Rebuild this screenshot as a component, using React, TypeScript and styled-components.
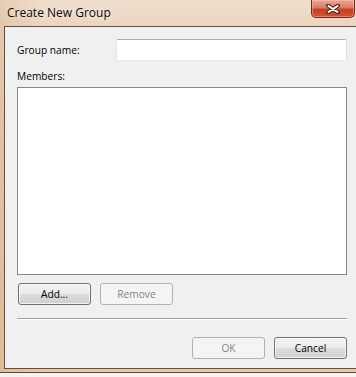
import React, { FC } from "react";
import styled, { createGlobalStyle } from "styled-components";

const GlobalStyle = createGlobalStyle`
  html, body {
    margin: 0;
    padding: 0;
    background: #f6f2ee;
    overflow: hidden;
  }
  * { box-sizing: border-box; }
`

const Window = styled.div`
  width: 356px;
  height: 373px;
  display: flex;
  flex-direction: column;
  overflow: hidden;
  font-family: "Open Sans", "Noto Sans", sans-serif;
  font-size: 10.2px;
  color: #000;
  border-bottom: 1px solid #5a4a40;
  background:
    linear-gradient(to right, rgba(200, 150, 110, 0.25) 0, rgba(200, 150, 110, 0) 40px),
    linear-gradient(to bottom, #efdecd 0, #ecd6c1 22px, #e8cdb2 200px, #e9c8a6 100%);
`

const TitleBar = styled.div`
  height: 26px;
  flex: none;
  display: flex;
  align-items: flex-start;
  padding-left: 7px;
`

const Title = styled.div`
  margin-top: 4px;
  font-size: 12px;
  color: #0a0a0a;
  text-shadow: 0 0 6px rgba(255, 255, 255, 0.9);
`

const CloseButton = styled.div`
  margin-left: auto;
  margin-right: 1px;
  width: 44px;
  height: 18px;
  display: flex;
  align-items: center;
  justify-content: center;
  border: 1px solid #6e2a1c;
  border-top: none;
  border-radius: 0 0 5px 5px;
  background: linear-gradient(to bottom, #e9a896 0, #dc7a62 45%, #c8401f 55%, #d2522e 100%);
  box-shadow: inset 0 0 0 1px rgba(255, 200, 180, 0.45);
`

const Client = styled.div`
  margin-left: 4px;
  width: 370px;
  height: 343px;
  flex: none;
  border: 1px solid #5e5048;
  background: #f0f0f0;
  padding: 12px 0 0 12px;
`

const Content = styled.div`
  width: 330px;
  display: flex;
  flex-direction: column;
`

const FieldRow = styled.div`
  display: flex;
  align-items: center;
  justify-content: space-between;
  height: 22px;
`

const Label = styled.div`
  line-height: 15px;
`

const TextBox = styled.div`
  width: 231px;
  height: 22px;
  background: #fff;
  border: 1px solid #e3e9ef;
  border-top-color: #abadb3;
  border-left-color: #e2e3ea;
  border-right-color: #dbdfe6;
  border-radius: 2px;
`

const MembersLabel = styled(Label)`
  margin-top: 8px;
`

const ListBox = styled.div`
  margin-top: 3px;
  height: 188px;
  background: #fff;
  border: 1px solid #828790;
`

const ButtonRow = styled.div<{ end?: boolean }>`
  display: flex;
  gap: 9px;
  justify-content: ${p => (p.end ? "flex-end" : "flex-start")};
  padding-left: ${p => (p.end ? "0" : "1px")};
`

const Button = styled.div<{ disabled?: boolean }>`
  width: 73px;
  height: 22px;
  display: flex;
  align-items: center;
  justify-content: center;
  border-radius: 3px;
  border: 1px solid ${p => (p.disabled ? "#adb2b5" : "#707070")};
  color: ${p => (p.disabled ? "#838383" : "#000")};
  background: ${p =>
    p.disabled
      ? "#f4f4f4"
      : "linear-gradient(to bottom, #f2f2f2 0, #ebebeb 50%, #dddddd 50%, #cfcfcf 100%)"};
  box-shadow: ${p => (p.disabled ? "none" : "inset 0 0 0 1px rgba(255, 255, 255, 0.7)")};
`

const Separator = styled.div`
  margin-top: 13px;
  height: 2px;
  border-top: 1px solid #a0a0a0;
  border-bottom: 1px solid #ffffff;
`

const CloseGlyph: FC = () => (
  <svg width="14" height="10" viewBox="0 0 14 10">
    <path d="M2 1.5 L12 8.5 M12 1.5 L2 8.5" stroke="#5a2a20" strokeWidth="4" strokeLinecap="round" />
    <path d="M2.5 2 L11.5 8 M11.5 2 L2.5 8" stroke="#ffffff" strokeWidth="2" strokeLinecap="round" />
  </svg>
)

export default function App() {
  return (
    <>
      <GlobalStyle />
      <Window>
        <TitleBar>
          <Title>Create New Group</Title>
          <CloseButton>
            <CloseGlyph />
          </CloseButton>
        </TitleBar>
        <Client>
          <Content>
            <FieldRow>
              <Label>Group name:</Label>
              <TextBox />
            </FieldRow>
            <MembersLabel>Members:</MembersLabel>
            <ListBox />
            <ButtonRow style={{ marginTop: 8 }}>
              <Button>Add...</Button>
              <Button disabled>Remove</Button>
            </ButtonRow>
            <Separator />
            <ButtonRow end style={{ marginTop: 17 }}>
              <Button disabled>OK</Button>
              <Button>Cancel</Button>
            </ButtonRow>
          </Content>
        </Client>
      </Window>
    </>
  )
}
